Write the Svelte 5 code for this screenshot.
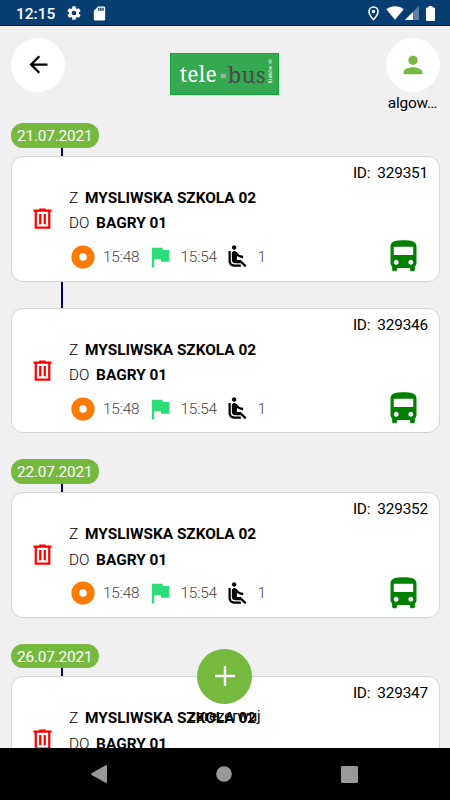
<script>
    const groups = [
        { date: "21.07.2021", rides: [329351, 329346] },
        { date: "22.07.2021", rides: [329352] },
        { date: "26.07.2021", rides: [329347] },
    ];

    const ride = {
        from: "MYSLIWSKA SZKOLA 02",
        to: "BAGRY 01",
        start: "15:48",
        end: "15:54",
        seats: 1,
    };
</script>

<div class="screen">
    <div class="status-bar">
        <span class="clock">12:15</span>
        <svg class="gear" width="16" height="16" viewBox="0 0 24 24" fill="#fff">
            <path d="M19.43 12.98c.04-.32.07-.64.07-.98s-.03-.66-.07-.98l2.11-1.65c.19-.15.24-.42.12-.64l-2-3.46c-.12-.22-.39-.3-.61-.22l-2.49 1c-.52-.4-1.08-.73-1.69-.98l-.38-2.65C14.46 2.18 14.25 2 14 2h-4c-.25 0-.46.18-.49.42l-.38 2.65c-.61.25-1.17.59-1.69.98l-2.49-1c-.23-.09-.49 0-.61.22l-2 3.46c-.13.22-.07.49.12.64l2.11 1.65c-.04.32-.07.65-.07.98s.03.66.07.98l-2.11 1.65c-.19.15-.24.42-.12.64l2 3.46c.12.22.39.3.61.22l2.49-1c.52.4 1.08.73 1.69.98l.38 2.65c.03.24.24.42.49.42h4c.25 0 .46-.18.49-.42l.38-2.65c.61-.25 1.17-.59 1.69-.98l2.49 1c.23.09.49 0 .61-.22l2-3.46c.12-.22.07-.49-.12-.64l-2.11-1.65zM12 15.5a3.5 3.5 0 1 1 0-7 3.5 3.5 0 0 1 0 7z" />
        </svg>
        <svg class="sd" width="17" height="17" viewBox="0 0 24 24" fill="#fff">
            <path d="M18 2h-8L4.02 8 4 20c0 1.1.9 2 2 2h12c1.1 0 2-.9 2-2V4c0-1.1-.9-2-2-2zm-6 6h-2V4h2v4zm3 0h-2V4h2v4zm3 0h-2V4h2v4z" />
        </svg>
        <div class="status-right">
            <svg width="11" height="15" viewBox="0 0 11 15" fill="none" stroke="#fff" stroke-width="1.5">
                <path d="M5.5 1C3 1 1 3 1 5.5 1 8.8 5.5 13.6 5.5 13.6S10 8.8 10 5.5C10 3 8 1 5.5 1z" />
                <circle cx="5.5" cy="5.5" r="1.7" fill="#fff" stroke="none" />
            </svg>
            <svg class="wifi" width="18" height="14" viewBox="0 0 18 14" fill="#fff">
                <path d="M.3 3.2C2.6 1.3 5.6.3 9 .3s6.4 1 8.7 2.9L9 13.7z" />
            </svg>
            <svg class="signal" width="14" height="14" viewBox="0 0 14 14" fill="#fff">
                <path d="M14 0v14H0z" fill-opacity=".35" />
                <path d="M8 6v8H0z" />
            </svg>
            <svg class="battery" width="9" height="15" viewBox="0 0 9 15" fill="#fff">
                <path d="M2.5 0h4v1.5H8q1 0 1 1V14q0 1-1 1H1q-1 0-1-1V2.5q0-1 1-1h1.5z" />
            </svg>
        </div>
    </div>

    <header>
        <button class="round" aria-label="Wstecz">
            <svg width="27" height="27" viewBox="0 0 24 24">
                <path d="M20 11H7.83l5.59-5.59L12 4l-8 8 8 8 1.41-1.41L7.83 13H20v-2z" />
            </svg>
        </button>
        <div class="logo">
            <span class="tele">tele</span>
            <span class="dash"></span>
            <span class="bus">bus</span>
            <span class="city">Kraków ®</span>
        </div>
        <div class="profile">
            <button class="round" aria-label="Profil">
                <svg width="28" height="28" viewBox="0 0 24 24" fill="#76b93f">
                    <path d="M12 12c2.21 0 4-1.79 4-4s-1.79-4-4-4-4 1.79-4 4 1.79 4 4 4zm0 2c-2.67 0-8 1.34-8 4v2h16v-2c0-2.66-5.33-4-8-4z" />
                </svg>
            </button>
            <span class="user">algow…</span>
        </div>
    </header>

    <main>
        {#each groups as group}
            <section>
                <div class="date">{group.date}</div>
                {#each group.rides as id}
                    <div class="line"></div>
                    <article class="card">
                        <svg class="trash" width="27" height="27" viewBox="0 0 24 24" fill="#f00">
                            <path d="M9,3V4H4V6H5V21H19V6H20V4H15V3H9M7,6H17V19H7V6M9,8V17H11V8H9M13,8V17H15V8H13Z" />
                        </svg>
                        <div class="body">
                            <div class="ride-id"><span>ID:</span><span>{id}</span></div>
                            <div class="stop"><span>Z</span><b>{ride.from}</b></div>
                            <div class="stop"><span>DO</span><b>{ride.to}</b></div>
                            <div class="info">
                                <svg class="start" width="24" height="24" viewBox="0 0 24 24">
                                    <circle cx="12" cy="12" r="7.7" fill="none" stroke="#ff7a00" stroke-width="7.8" />
                                </svg>
                                <span class="time">{ride.start}</span>
                                <svg class="flag" width="28" height="28" viewBox="0 0 24 24" fill="#2bdc79">
                                    <path d="M14.4 6L14 4H5v17h2v-7h5.6l.4 2h7V6z" />
                                </svg>
                                <span class="time">{ride.end}</span>
                                <svg class="seat" width="27" height="27" viewBox="0 0 24 24">
                                    <path d="M7.59 5.41c-.78-.78-.78-2.05 0-2.83.78-.78 2.05-.78 2.83 0 .78.78.78 2.05 0 2.83-.79.79-2.05.79-2.83 0zM6 16V7H4v9c0 2.76 2.24 5 5 5h6v-2H9c-1.66 0-3-1.34-3-3zm14 4.07L14.93 15H11.5v-3.68c1.4 1.15 3.6 2.16 5.5 2.16v-2.16c-1.66.02-3.61-.87-4.67-2.04l-1.4-1.55c-.19-.21-.43-.38-.69-.5-.29-.14-.62-.23-.96-.23h-.03C8.01 7 7 8.01 7 9.25V15c0 1.66 1.34 3 3 3h5.07l3.5 3.5L20 20.07z" />
                                </svg>
                                <span class="seats">{ride.seats}</span>
                                <svg class="bus-icon" width="39" height="39" viewBox="0 0 24 24" fill="#008000">
                                    <path d="M4 16c0 .88.39 1.67 1 2.22V20c0 .55.45 1 1 1h1c.55 0 1-.45 1-1v-1h8v1c0 .55.45 1 1 1h1c.55 0 1-.45 1-1v-1.78c.61-.55 1-1.34 1-2.22V6c0-3.5-3.58-4-8-4s-8 .5-8 4v10zm3.5 1c-.83 0-1.5-.67-1.5-1.5S6.67 14 7.5 14s1.5.67 1.5 1.5S8.33 17 7.5 17zm9 0c-.83 0-1.5-.67-1.5-1.5s.67-1.5 1.5-1.5 1.5.67 1.5 1.5-.67 1.5-1.5 1.5zm1.5-6H6V6h12v5z" />
                                </svg>
                            </div>
                        </div>
                    </article>
                {/each}
            </section>
        {/each}
    </main>

    <div class="reserve">
        <button class="fab" aria-label="Dodaj">
            <svg width="20" height="20" viewBox="0 0 20 20" fill="#fff">
                <path d="M8.8 0h2.400v8.800H20v2.400h-8.800V20H8.800v-8.800H0V8.800h8.800z" />
            </svg>
        </button>
        <span>zarezerwuj</span>
    </div>

    <nav>
        <svg width="16" height="18" viewBox="0 0 16 18" fill="#999">
            <path d="M15 0q1 0 1 1v16q0 1-1 1L.6 9.9Q-.4 9 .6 8.2z" />
        </svg>
        <svg width="16" height="16" viewBox="0 0 16 16" fill="#999">
            <circle cx="8" cy="8" r="7.8" />
        </svg>
        <svg width="17" height="17" viewBox="0 0 17 17" fill="#999">
            <rect width="17" height="17" rx="1.2" />
        </svg>
    </nav>
</div>

<style>
    :global(body) {
        margin: 0;
    }

    .screen {
        position: relative;
        display: flex;
        flex-direction: column;
        width: 450px;
        height: 800px;
        overflow: hidden;
        background: #f0f0f0;
        color: #000;
        font-family: Roboto, sans-serif;
        font-size: 15.4px;
        letter-spacing: -0.2px;
    }

    svg {
        display: block;
        flex: none;
    }

    button {
        border: 0;
        padding: 0;
    }

    .status-bar {
        box-sizing: border-box;
        display: flex;
        align-items: center;
        flex: none;
        height: 26px;
        padding: 2px 15px 0 16px;
        background: #083d72;
        border-bottom: 1px solid #00125a;
        color: #fff;
    }

    .clock {
        width: 39px;
        font-size: 15.5px;
        font-weight: 500;
        letter-spacing: 0;
        line-height: 20px;
    }

    .gear {
        margin: -1px 0 0 11px;
    }

    .sd {
        margin: -1px 0 0 8.5px;
    }

    .status-right {
        display: flex;
        align-items: center;
        margin-left: auto;
    }

    .status-right svg {
        margin-top: -1px;
    }

    .status-right svg + .wifi {
        margin-left: 7.5px;
    }

    .status-right svg + .signal {
        margin-left: 1px;
    }

    .status-right svg + .battery {
        margin-left: 7px;
    }

    header {
        display: flex;
        justify-content: space-between;
        align-items: flex-start;
        flex: none;
        height: 85.8px;
        padding: 11.5px 10.5px 0 11px;
    }

    .round {
        display: flex;
        align-items: center;
        justify-content: center;
        width: 54px;
        height: 54px;
        border-radius: 50%;
        background: #fff;
    }

    .logo {
        box-sizing: border-box;
        display: flex;
        align-items: center;
        width: 109px;
        height: 42px;
        margin: 15.5px 2px 0 0;
        padding-left: 9px;
        border: 1px solid #10a837;
        background: #34a94f;
        font-family: "Noto Serif", "DejaVu Serif", serif;
        font-size: 21px;
        letter-spacing: 0.2px;
        line-height: 38px;
    }

    .tele {
        width: 39px;
        color: #fff;
    }

    .dash {
        width: 5px;
        height: 4px;
        margin: 3px 2px 0;
        background: #aaa;
    }

    .bus {
        width: 38px;
        color: #4a4a4a;
        font-size: 22px;
        line-height: 37px;
    }

    .city {
        margin: 0 0 6px 1px;
        color: #fff;
        font-family: Roboto, sans-serif;
        font-size: 5px;
        line-height: 6px;
        writing-mode: vertical-rl;
        transform: rotate(180deg);
    }

    .profile {
        display: flex;
        flex-direction: column;
        align-items: center;
        width: 54px;
    }

    .user {
        margin-top: 2px;
        line-height: 18px;
    }

    main {
        flex: 1;
        min-height: 0;
        overflow: hidden;
        padding: 0 10.5px 0 11px;
    }

    section {
        margin-bottom: 26px;
    }

    .date {
        width: 87.5px;
        height: 24.7px;
        border-radius: 12px;
        background: #76b93f;
        color: #fff;
        line-height: 26px;
        text-align: center;
    }

    .line {
        width: 2px;
        height: 26px;
        margin-left: 50px;
        background: #00005f;
    }

    .date + .line {
        height: 8px;
    }

    .card {
        box-sizing: border-box;
        display: flex;
        align-items: center;
        height: 125.7px;
        padding: 0 10.5px 0 17px;
        border: 1px solid #d3d6d9;
        border-radius: 12px;
        background: #fff;
    }

    .body {
        flex: 1;
        align-self: flex-start;
        margin-left: 13px;
        padding-top: 4px;
    }

    .ride-id {
        display: flex;
        justify-content: flex-end;
        gap: 7px;
        line-height: 25px;
    }

    .stop {
        display: flex;
        gap: 7px;
        line-height: 25.5px;
    }

    .stop span {
        font-weight: 300;
    }

    .stop b {
        letter-spacing: 0;
    }

    .info {
        display: flex;
        align-items: center;
        height: 40px;
        color: #444;
        font-weight: 300;
    }

    .start {
        margin-left: 2px;
    }

    .time {
        width: 38px;
        margin-left: 8px;
    }

    .flag {
        margin-left: 5px;
    }

    .flag + .time {
        margin-left: 6.5px;
    }

    .seat {
        margin-left: 5px;
    }

    .seats {
        margin-left: 7px;
    }

    .bus-icon {
        margin: 0 5.5px 0 auto;
    }

    .reserve {
        position: absolute;
        top: 648.7px;
        left: 0;
        right: 1px;
        display: flex;
        flex-direction: column;
        align-items: center;
        line-height: 20px;
    }

    .reserve span {
        margin-top: 2px;
    }

    .fab {
        display: flex;
        align-items: center;
        justify-content: center;
        width: 55px;
        height: 55px;
        border-radius: 50%;
        background: #76b93f;
    }

    nav {
        display: flex;
        align-items: center;
        justify-content: space-between;
        flex: none;
        height: 52px;
        padding: 0 92.5px 0 91px;
        background: #000;
    }
</style>
